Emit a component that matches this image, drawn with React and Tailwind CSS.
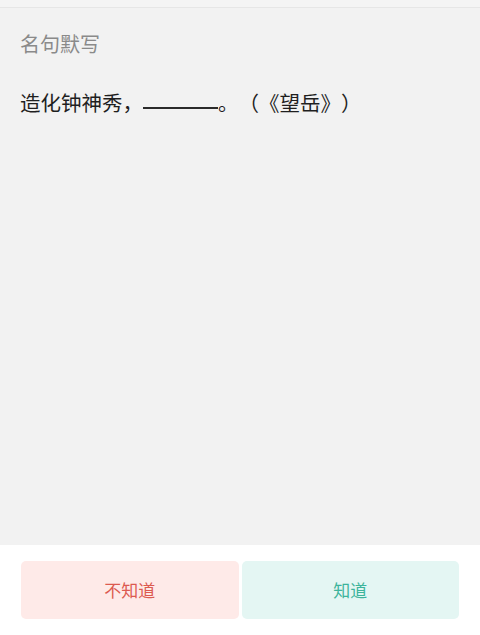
export default function App() {
  const cjk = { fontFamily: '"Noto Sans CJK SC", "Noto Sans", sans-serif' };
  return (
    <div className="w-[480px] h-[635px] flex flex-col bg-[#f2f2f2] [text-spacing-trim:space-all]" style={cjk}>
      <div className="h-[8px] bg-[#f4f4f4] border-b border-[#e6e6e6]" />
      <div className="flex-1 px-[20px]">
        <div className="mt-[22px] text-[20px] leading-[28px] text-[#8a8a8a]">名句默写</div>
        <div className="mt-[29px] text-[20.5px] leading-[30px] text-[#1f1f1f] whitespace-nowrap [text-spacing-trim:space-all]">
          造化钟神秀，<span className="inline-block w-[75px] border-b-2 border-[#2a2a2a] align-baseline translate-y-[-2px] h-[1px]"></span>。（《望岳》）
        </div>
      </div>
      <div className="h-[90px] bg-white flex gap-[3px] px-[21px] pt-[16px] pb-[16px]">
        <button className="flex-1 rounded-[5px] bg-[#feeae8] text-[#dc5a50] text-[17px]">不知道</button>
        <button className="flex-1 rounded-[5px] bg-[#e4f6f3] text-[#3db49b] text-[17px]">知道</button>
      </div>
    </div>
  );
}
